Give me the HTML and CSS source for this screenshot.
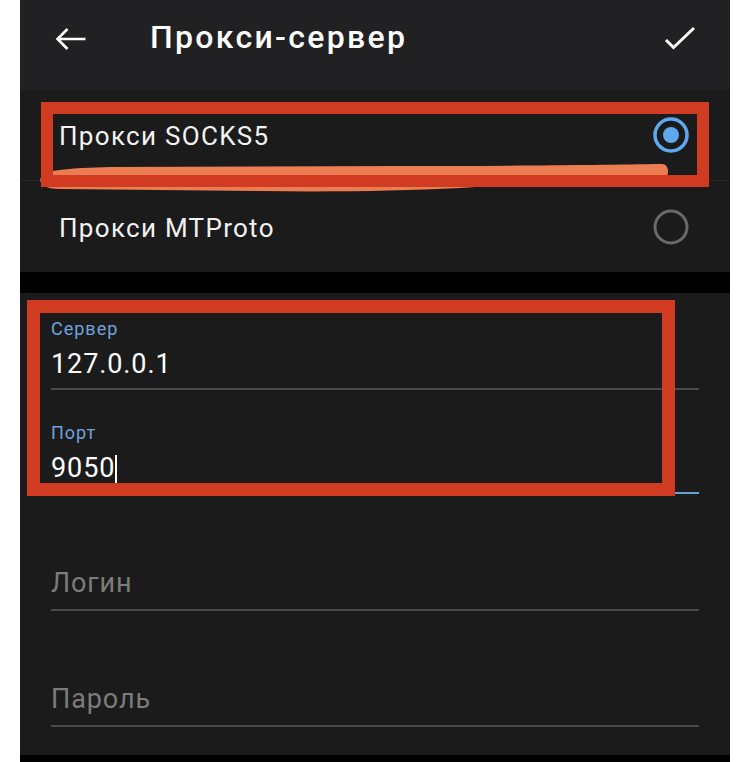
FILE: index.html
```html
<!DOCTYPE html>
<html lang="ru">
<head>
    <meta charset="UTF-8">
    <meta name="viewport" content="width=device-width, initial-scale=1.0">
    <title>Прокси-сервер</title>
    <link rel="stylesheet" href="styles.css">
</head>
<body>
    <div class="screen">
        <div class="header">
            <svg class="back-icon" width="32" height="24" viewBox="0 0 32 24">
                <path d="M30.5 12H3 M12.5 2 L2.5 12 L12.5 22" fill="none" stroke="#fff" stroke-width="2.6"/>
            </svg>
            <div class="title">Прокси-сервер</div>
            <svg class="done-icon" width="32" height="26" viewBox="0 0 32 26">
                <path d="M2 14 L9.5 21.5 L30 2" fill="none" stroke="#fff" stroke-width="3"/>
            </svg>
        </div>

        <div class="type-list">
            <div class="type-row">
                <span>Прокси SOCKS5</span>
                <svg width="36" height="36" viewBox="0 0 36 36">
                    <circle cx="18" cy="18" r="16" fill="none" stroke="#5ea8ee" stroke-width="3.5"/>
                    <circle cx="18" cy="18" r="8" fill="#5ea8ee"/>
                </svg>
            </div>
            <div class="type-row">
                <span>Прокси MTProto</span>
                <svg width="36" height="36" viewBox="0 0 36 36">
                    <circle cx="18" cy="18" r="16" fill="none" stroke="#6a6a6a" stroke-width="3"/>
                </svg>
            </div>
        </div>

        <div class="fields">
            <div class="field">
                <div class="field-label">Сервер</div>
                <div class="field-value">127.0.0.1</div>
            </div>
            <div class="field active">
                <div class="field-label">Порт</div>
                <div class="field-value">9050<span class="cursor"></span></div>
            </div>
            <div class="field empty">
                <div class="field-value placeholder">Логин</div>
            </div>
            <div class="field empty last">
                <div class="field-value placeholder">Пароль</div>
            </div>
        </div>

        <!-- пометки поверх скриншота -->
        <svg class="marker" width="710" height="762" viewBox="20 0 710 762">
            <path d="M42 176 C45 170 70 168 110 167 L400 166 C500 166 600 165 662 164 C668 164 670 172 666 178 C600 180 520 184 460 188 C400 191 330 192 260 191 L60 189 C40 189 38 180 42 176 Z" fill="#ec7d52"/>
        </svg>
        <div class="frame frame-type"></div>
        <div class="frame frame-server"></div>
    </div>
</body>
</html>
```

FILE: styles.css
```css
body { margin: 0; background: #fff; font-family: Roboto, "Noto Sans", sans-serif; }
.screen { position: relative; width: 710px; height: 762px; margin-left: 20px; background: #000; overflow: hidden; }

.header { height: 90px; background: #212123; box-sizing: border-box; padding: 18px 35px 0 36px; }
.header { display: flex; align-items: flex-start; }
.header > * { flex: none; }
.back-icon { margin-top: 9px; margin-left: -1px; }
.title { height: 38px; line-height: 38px; font-size: 32px; font-weight: 500; letter-spacing: 2.3px; color: #fff; margin-left: 63px; }
.done-icon { margin-left: auto; margin-top: 8px; margin-right: -1px; }

.type-list { background: #1b1b1b; }
.type-row { display: flex; align-items: center; justify-content: space-between; height: 91px; padding: 0 41px 0 39px; box-sizing: border-box; font-size: 26px; line-height: 30px; letter-spacing: 1.3px; color: #f2f2f2; }
.type-row:first-child { border-bottom: 1px solid #262626; }
.type-row span { padding-top: 2px; }

.fields { margin-top: 21px; height: 462px; box-sizing: border-box; padding: 25px 31px 0; background: #1b1b1b; }
.field { border-bottom: 2px solid #4a4a4a; padding-bottom: 7px; }
.field + .field { margin-top: 32px; }
.field.active { border-bottom-color: #6a9fdc; }
.field.empty { margin-top: 45px; padding-top: 27px; padding-bottom: 9px; }
.field.last { margin-top: 44px; }
.field-label { font-size: 18px; line-height: 22px; letter-spacing: 1px; color: #6fa3dc; margin-bottom: 7px; }
.field-value { font-size: 27px; line-height: 34px; letter-spacing: 0.9px; color: #fff; }
.placeholder { color: #7c7c7c; }
.cursor { display: inline-block; width: 2px; height: 28px; background: #fff; vertical-align: -6px; margin-left: 0; }

.marker { position: absolute; left: 0; top: 0; pointer-events: none; }
.frame { position: absolute; box-sizing: border-box; border: 12px solid #d13b22; }
.frame-type { left: 21px; top: 102px; width: 668px; height: 85px; }
.frame-server { left: 7px; top: 300px; width: 648px; height: 196px; border-width: 13px; }
```
